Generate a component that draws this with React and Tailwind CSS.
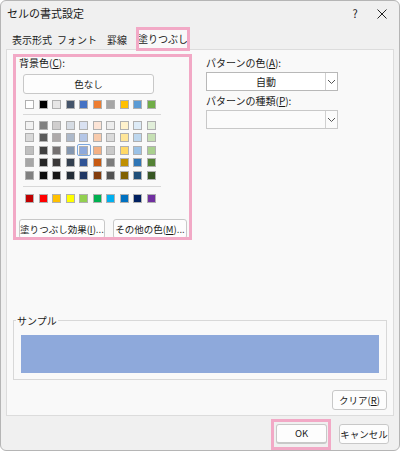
import React from 'react';

const themeTop = ['#FFFFFF', '#000000', '#E7E6E6', '#44546A', '#4472C4', '#ED7D31', '#A5A5A5', '#FFC000', '#5B9BD5', '#70AD47'];
const tints = [
  ['#F2F2F2', '#808080', '#D0CECE', '#D6DCE4', '#D9E1F2', '#FCE4D6', '#EDEDED', '#FFF2CC', '#DDEBF7', '#E2EFDA'],
  ['#D9D9D9', '#595959', '#AEAAAA', '#ADB9CA', '#B4C6E7', '#F8CBAD', '#DBDBDB', '#FFE699', '#BDD7EE', '#C6E0B4'],
  ['#BFBFBF', '#404040', '#757171', '#8497B0', '#8EA9DB', '#F4B084', '#C9C9C9', '#FFD966', '#9BC2E6', '#A9D08E'],
  ['#A6A6A6', '#262626', '#3A3838', '#333F4F', '#305496', '#C65911', '#7B7B7B', '#BF8F00', '#2F75B5', '#548235'],
  ['#808080', '#0D0D0D', '#171616', '#222B35', '#203764', '#833C0C', '#525252', '#806000', '#1F4E78', '#375623'],
];
const standard = ['#C00000', '#FF0000', '#FFC000', '#FFFF00', '#92D050', '#00B050', '#00B0F0', '#0070C0', '#002060', '#7030A0'];

const Swatch = ({ color, selected }) => (
  <div className={`w-[13.5px] h-[12px] flex items-center justify-center ${selected ? 'border border-[#7aa7e0] rounded-[2px]' : ''}`}>
    <div className="w-[9px] h-[9px] border border-[#b0b0b0]" style={{ background: color }} />
  </div>
);

const Row = ({ colors, sel }) => (
  <div className="flex">
    {colors.map((c, i) => <Swatch key={i} color={c} selected={i === sel} />)}
  </div>
);

const Btn = ({ children, className = '' }) => (
  <div className={`h-[20px] border border-[#c8c8c8] bg-[#fdfdfd] rounded-[3px] flex items-center justify-center whitespace-nowrap text-[9.5px] ${className}`}>{children}</div>
);

const Chevron = () => (
  <svg width="9" height="6" viewBox="0 0 9 6"><path d="M1 1l3.5 3.5L8 1" fill="none" stroke="#555" strokeWidth="1" /></svg>
);

export default function App() {
  return (
    <div className="relative w-[400px] h-[451px] bg-[#f0f0f0] border border-[#b5b5b5] rounded-[6px] overflow-hidden text-[#1a1a1a]" style={{ fontFamily: '"Noto Sans CJK JP", "Noto Sans", sans-serif' }}>
      {/* title */}
      <div className="h-[25px] flex items-center pl-[6px] text-[11px]">
        <span className="flex-1">セルの書式設定</span>
        <span className="w-[20px] text-center mr-[12px]">?</span>
        <svg width="10" height="10" viewBox="0 0 10 10" className="mr-[12px]"><path d="M0.5 0.5l9 9M9.5 0.5l-9 9" stroke="#222" strokeWidth="1" /></svg>
      </div>
      {/* tabs */}
      <div className="flex items-end h-[23px] pl-[8px] text-[10px] whitespace-nowrap">
        <div className="w-[46px] h-[20px] flex items-center justify-center">表示形式</div>
        <div className="w-[44px] h-[20px] flex items-center justify-center">フォント</div>
        <div className="w-[36px] h-[20px] flex items-center justify-center">罫線</div>
        <div className="ml-[3px] w-[50px] h-[22px] flex items-center justify-center bg-[#f9f9f9] border border-b-0 border-[#d8d8d8]">塗りつぶし</div>
      </div>
      {/* panel */}
      <div className="mx-[5px] h-[367px] bg-[#f9f9f9] border border-[#dcdcdc] flex flex-col">
        <div className="flex">
          <div className="w-[180px] pl-[12px] pt-[6px]">
            <div className="text-[10px] leading-[14px]">背景色(<u>C</u>):</div>
            <Btn className="w-[131px] h-[16px] mt-[4px] ml-[4px] rounded-[2px] border-[#8a8a8a]">色なし</Btn>
            <div className="ml-[4px] mt-[4px]">
              <Row colors={themeTop} />
              <div className="w-[138px] h-px bg-[#d8d8d8] my-[4px]" />
              <div className="flex flex-col gap-[0.5px]">
                {tints.map((r, i) => <Row key={i} colors={r} sel={i === 2 ? 4 : -1} />)}
              </div>
              <div className="w-[138px] h-px bg-[#d8d8d8] my-[5px]" />
              <Row colors={standard} />
            </div>
            <div className="flex gap-[8px] mt-[15px]">
              <Btn className="w-[88px]">塗りつぶし効果(<u>I</u>)...</Btn>
              <Btn className="w-[76px]">その他の色(<u>M</u>)...</Btn>
            </div>
          </div>
          <div className="pl-[19px] pt-[6px] text-[10px]">
            <div className="leading-[14px]">パターンの色(<u>A</u>):</div>
            <div className="mt-[2px] w-[132px] h-[19px] border border-[#b8b8b8] bg-white flex">
              <div className="flex-1 flex items-center justify-center">自動</div>
              <div className="w-[12px] border-l border-[#d0d0d0] flex items-center justify-center"><Chevron /></div>
            </div>
            <div className="leading-[14px] mt-[3px]">パターンの種類(<u>P</u>):</div>
            <div className="mt-[2px] w-[132px] h-[19px] border border-[#c8c8c8] bg-[#fbfbfb] flex justify-end">
              <div className="w-[12px] border-l border-[#d0d0d0] flex items-center justify-center"><Chevron /></div>
            </div>
          </div>
        </div>
        <div className="flex-1" />
        <div className="relative mx-[6px] h-[60px] border border-[#d8d8d8] mb-[10px]">
          <span className="absolute -top-[8px] left-[2px] bg-[#f9f9f9] text-[10px] px-[1px]">サンプル</span>
          <div className="mx-[7px] mt-[14px] h-[38px] bg-[#8EA9DB]" />
        </div>
        <div className="flex justify-end pr-[6px] pb-[5px]">
          <Btn className="w-[55px]">クリア(<u>R</u>)</Btn>
        </div>
      </div>
      <div className="flex justify-end gap-[12px] pr-[10px] pt-[8px]">
        <Btn className="w-[51px] border-[#5b8fd6] border-b-2">OK</Btn>
        <Btn className="w-[50px]">キャンセル</Btn>
      </div>
      {/* highlights */}
      <div className="absolute left-[135px] top-[26px] w-[54px] h-[24px] border-[3px] border-[#f2a9c6]" />
      <div className="absolute left-[12px] top-[53px] w-[179px] h-[186px] border-[3px] border-[#f2a9c6]" />
      <div className="absolute left-[270px] top-[418px] w-[60px] h-[31px] border-[3px] border-[#f2a9c6]" />
    </div>
  );
}
